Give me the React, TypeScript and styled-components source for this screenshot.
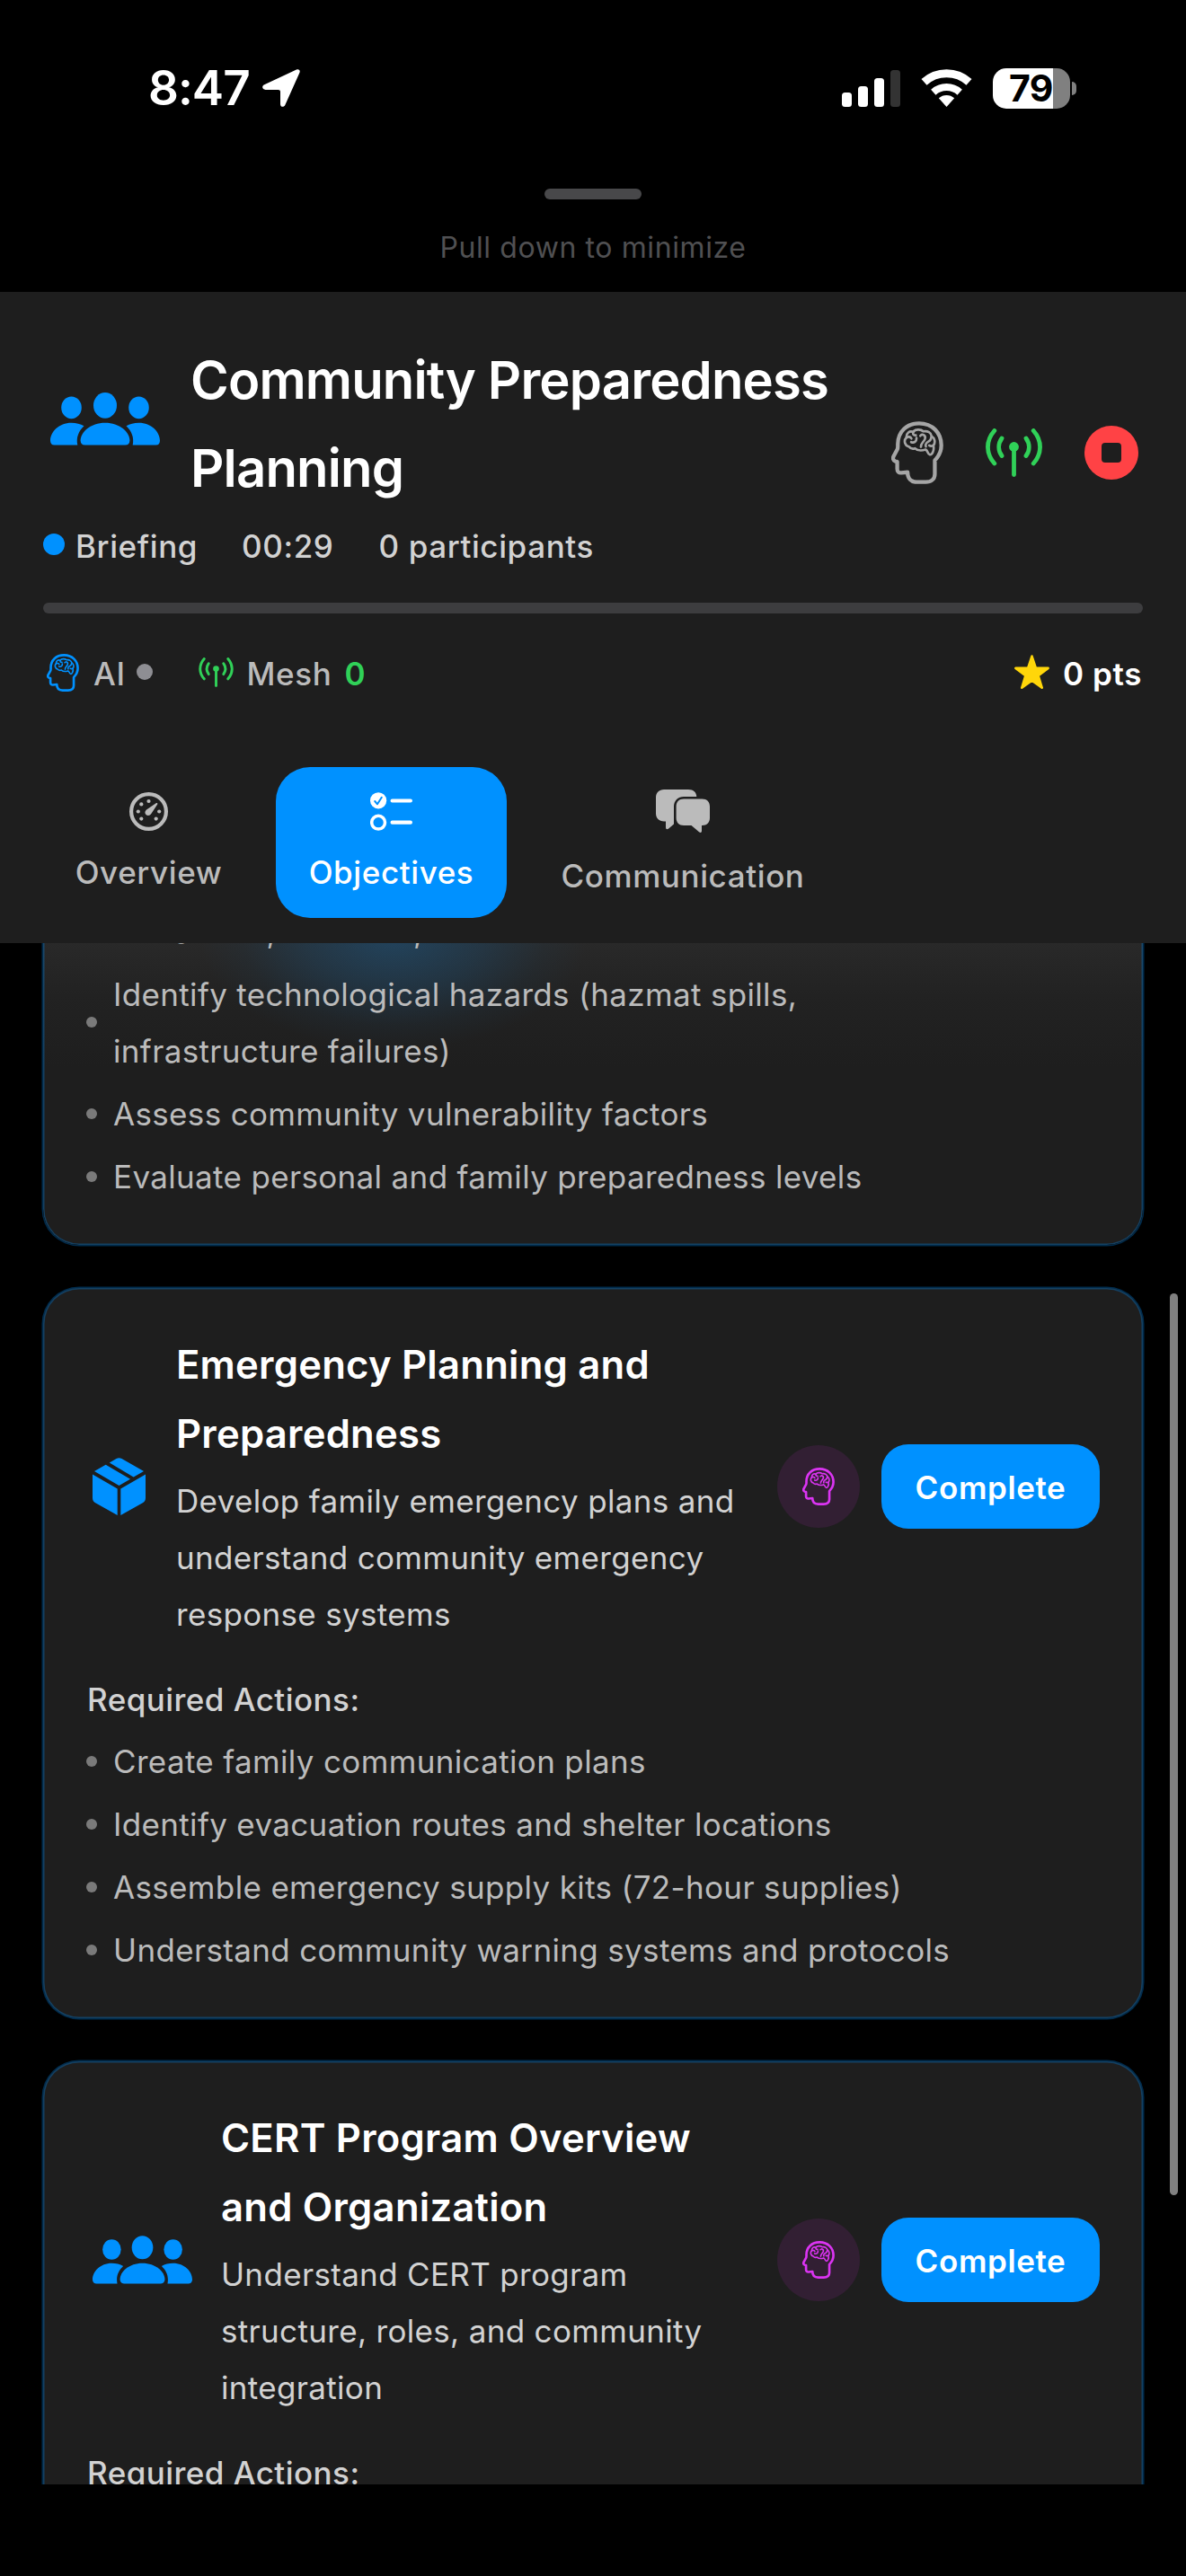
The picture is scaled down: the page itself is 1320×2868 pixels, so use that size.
import React from "react";
import styled, { createGlobalStyle } from "styled-components";

const BLUE = "#0091ff";
const GREEN = "#30d158";
const PANEL = "#1e1e1e";
const PURPLE = "#db34f2";

const GlobalStyle = createGlobalStyle`
  html, body { margin: 0; padding: 0; background: #000; }
  * { box-sizing: border-box; }
`;

const Screen = styled.main`
  width: 1320px;
  height: 2868px;
  background: #000;
  display: flex;
  flex-direction: column;
  overflow: hidden;
  font-family: Inter, "Liberation Sans", sans-serif;
  white-space: nowrap;

  svg {
    display: block;
    flex: none;
  }
`;

/* ---------- status bar ---------- */

const StatusBar = styled.div`
  height: 210px;
  padding: 0 122px 14px 165px;
  display: flex;
  align-items: center;
  justify-content: space-between;
`;

const Clock = styled.div`
  display: flex;
  align-items: center;
  gap: 14px;
  color: #fff;
  font-size: 53px;
  font-weight: 600;
  line-height: 64px;
  letter-spacing: -1px;
`;

const StatusIcons = styled.div`
  display: flex;
  align-items: center;
  gap: 23px;
`;

const Battery = styled.div`
  display: flex;
  align-items: center;
  gap: 2px;
`;

const BatteryBody = styled.div`
  width: 86px;
  height: 45px;
  padding-right: 19px;
  border-radius: 15px;
  background: linear-gradient(90deg, #fff 67px, #808080 67px);
  color: #000;
  font-size: 41px;
  font-weight: 700;
  line-height: 45px;
  letter-spacing: -0.5px;
  text-align: right;
`;

const BatteryCap = styled.div`
  width: 5px;
  height: 15px;
  border-radius: 0 5px 5px 0;
  background: #808080;
`;

/* ---------- pull handle ---------- */

const Handle = styled.div`
  height: 115px;
  display: flex;
  flex-direction: column;
  align-items: center;
  gap: 31px;
`;

const Grabber = styled.div`
  width: 108px;
  height: 12px;
  border-radius: 6px;
  background: #48484a;
`;

const Hint = styled.div`
  color: #505052;
  font-size: 32px;
  line-height: 46px;
  letter-spacing: 0.6px;
`;

/* ---------- header ---------- */

const Header = styled.header`
  height: 725px;
  padding: 49px 48px 0;
  background: ${PANEL};
  display: flex;
  flex-direction: column;
`;

const TitleRow = styled.div`
  height: 196px;
  padding-left: 8px;
  display: flex;
  align-items: center;

  > svg {
    margin-bottom: 11px;
  }
`;

const Title = styled.h1`
  margin: 0 0 0 34px;
  color: #fff;
  font-size: 58px;
  font-weight: 600;
  line-height: 98px;
  letter-spacing: -0.83px;
`;

const HeaderActions = styled.div`
  margin: 64px 5px 0 auto;
  display: flex;
  align-items: center;
  gap: 47px;
`;

const StopButton = styled.div`
  width: 60px;
  height: 60px;
  border-radius: 50%;
  background: #ff4245;
  display: flex;
  align-items: center;
  justify-content: center;

  &::after {
    content: "";
    width: 22px;
    height: 22px;
    border-radius: 4px;
    background: ${PANEL};
  }
`;

const StatRow = styled.div`
  margin-top: 7px;
  height: 63px;
  display: flex;
  align-items: center;
  color: #d2d2d2;
  font-size: 35px;
  font-weight: 500;
  line-height: 63px;
  letter-spacing: 0.6px;
`;

const Stat = styled.span<{ $left: number }>`
  margin-left: ${(p) => p.$left}px;
`;

const Dot = styled.span<{ $size: number; $color: string; $left?: number; $lift?: number }>`
  flex: none;
  width: ${(p) => p.$size}px;
  height: ${(p) => p.$size}px;
  margin-left: ${(p) => p.$left ?? 0}px;
  margin-bottom: ${(p) => p.$lift ?? 0}px;
  border-radius: 50%;
  background: ${(p) => p.$color};
`;

const Progress = styled.div`
  flex: none;
  margin-top: 31px;
  height: 12px;
  border-radius: 6px;
  background: #3d3d3f;
`;

const SystemRow = styled.div`
  margin-top: 36px;
  height: 63px;
  padding: 0 1px 0 4px;
  display: flex;
  align-items: center;
  color: #bbb;
  font-size: 35px;
  font-weight: 500;
  line-height: 63px;
  letter-spacing: 0.6px;

  > svg {
    margin-bottom: 4px;
  }
`;

const MeshCount = styled.span`
  margin-left: 14px;
  color: ${GREEN};
  font-weight: 600;
`;

const Score = styled.div`
  margin-left: auto;
  display: flex;
  align-items: center;
  gap: 15px;
  color: #fff;
  font-weight: 600;

  > svg {
    margin-bottom: 4px;
  }
`;

const Tabs = styled.nav`
  margin-top: 72px;
  height: 168px;
  display: flex;
  align-items: center;
  gap: 24px;
`;

const Tab = styled.div<{ $width: number; $active?: boolean }>`
  width: ${(p) => p.$width}px;
  padding: 24px 0 19px;
  border-radius: 38px;
  background: ${(p) => (p.$active ? BLUE : "transparent")};
  color: ${(p) => (p.$active ? "#fff" : "#bbb")};
  display: flex;
  flex-direction: column;
  align-items: center;
  gap: 12px;
  font-size: 35px;
  font-weight: 500;
  line-height: 63px;
  letter-spacing: 0.6px;
`;

const TabIcon = styled.div<{ $height: number }>`
  height: ${(p) => p.$height}px;
  display: flex;
  align-items: center;
`;

/* ---------- objectives list ---------- */

const ScrollArea = styled.section`
  position: relative;
  height: 1716px;
  overflow: hidden;
`;

const ScrollThumb = styled.div`
  position: absolute;
  top: 390px;
  right: 9px;
  width: 9px;
  height: 1004px;
  border-radius: 5px;
  background: #808080;
`;

const CardList = styled.div`
  margin-top: -91px;
  padding: 0 48px;
  display: flex;
  flex-direction: column;
  gap: 48px;
`;

const Card = styled.article<{ $glow?: boolean }>`
  padding: 47px 48px 44px;
  border-radius: 40px;
  background: ${(p) =>
    p.$glow
      ? `radial-gradient(ellipse 215px 125px at 390px 85px, rgba(31, 78, 114, 0.7), rgba(31, 78, 114, 0.38) 45%, rgba(31, 78, 114, 0.1) 78%, transparent),
         linear-gradient(180deg, #292929 90px, #222 150px, ${PANEL} 230px)`
      : PANEL};
  box-shadow:
    0 0 0 1.5px rgba(0, 145, 255, 0.3),
    inset 0 0 0 1.5px rgba(0, 145, 255, 0.3);
`;

const CardHead = styled.div`
  padding-left: 7px;
  display: flex;
  align-items: center;
`;

const CardText = styled.div`
  margin-left: 32px;
  display: flex;
  flex-direction: column;
  gap: 5px;
`;

const CardTitle = styled.h2`
  margin: 0;
  color: #fff;
  font-size: 43.6px;
  font-weight: 600;
  line-height: 77px;
  letter-spacing: 0.23px;
`;

const CardDescription = styled.p`
  margin: 0;
  color: #d2d2d2;
  font-size: 35px;
  line-height: 63px;
  letter-spacing: 0.33px;
`;

const CardActions = styled.div`
  margin-left: auto;
  display: flex;
  align-items: center;
  gap: 24px;
`;

const AssistButton = styled.div`
  width: 92px;
  height: 92px;
  border-radius: 50%;
  background: #321f33;
  display: flex;
  align-items: center;
  justify-content: center;
`;

const CompleteButton = styled.div`
  width: 243px;
  height: 94px;
  border-radius: 30px;
  background: ${BLUE};
  color: #fff;
  font-size: 35px;
  font-weight: 600;
  line-height: 96px;
  letter-spacing: 0.6px;
  text-align: center;
`;

const ActionsLabel = styled.h3`
  margin: 32px 0 6px;
  padding-left: 1px;
  color: #d2d2d2;
  font-size: 35px;
  font-weight: 500;
  line-height: 63px;
  letter-spacing: 0.45px;
`;

const ActionList = styled.ul`
  margin: 0;
  padding: 0;
  list-style: none;
  display: flex;
  flex-direction: column;
  gap: 7px;
`;

const ActionItem = styled.li`
  display: flex;
  align-items: center;
  gap: 18px;
  color: #bbb;
  font-size: 35px;
  line-height: 63px;
  letter-spacing: 0.34px;
`;

/* ---------- icons ---------- */

const HeadIcon = ({ w, h, color }: { w: number; h: number; color: string }) => (
  <svg width={w} height={h} viewBox="34 27 176 211" preserveAspectRatio="none" fill="none" stroke={color} strokeLinecap="round" strokeLinejoin="round">
    <path
      strokeWidth="13"
      d="M56 104C56 62 86 34 128 34C173 34 203 66 203 108C203 129 195 144 181 158V204C181 222 168 231 150 231H120C100 231 89 219 89 198L68 200C59 201 54 196 54 187V163L47 161C40 158 38 151 42 144L54 122C57 117 56 112 56 104Z"
    />
    <g strokeWidth="8">
      <path d="M93 112C79 108 75 91 85 82C84 66 96 58 108 63C114 53 134 53 142 61C157 58 169 66 170 77C181 83 184 99 176 108C180 124 172 141 164 139C156 137 159 127 150 122C138 126 124 127 114 118C106 121 98 118 93 112Z" />
      <path d="M85 82C91 77 99 79 102 85" />
      <path d="M108 63C106 71 110 75 117 74" />
      <path d="M119 83C120 95 111 101 101 97" />
      <path d="M132 76C138 66 153 75 147 88C142 98 133 102 134 113" />
      <path d="M170 78C169 87 165 93 158 96C151 100 148 107 151 112" />
      <path d="M176 108C171 111 166 111 162 108" />
    </g>
  </svg>
);

const AntennaIcon = ({ w, h }: { w: number; h: number }) => (
  <svg width={w} height={h} viewBox="0 0 63 54" fill="none" stroke={GREEN} strokeWidth="4.8" strokeLinecap="round">
    <circle cx="31.5" cy="20.5" r="5.4" fill={GREEN} stroke="none" />
    <path d="M31.5 20V51.6" />
    <path d="M18 11C13.7 17 13.7 24.500 18 30.500M45 11C49.300 17 49.300 24.500 45 30.500" />
    <path d="M9.800 2.500C0 13.500 0 28 9.800 39M53.200 2.500C63 13.500 63 28 53.200 39" />
  </svg>
);

const PeopleIcon = ({ w, h }: { w: number; h: number }) => (
  <svg width={w} height={h} viewBox="0 0 122 59" fill={BLUE}>
    <ellipse cx="61" cy="14.400" rx="13" ry="14.400" />
    <ellipse cx="23.500" cy="16.800" rx="11.300" ry="12.400" />
    <ellipse cx="98.500" cy="16.800" rx="11.300" ry="12.400" />
    <path d="M33.600 53.500C33.600 44 45 33.700 61 33.700S88.400 44 88.400 53.500C88.400 56.500 86.600 58.500 83.400 58.500H38.600C35.400 58.500 33.600 56.500 33.600 53.500Z" />
    <path d="M0 53.500C0 44 9.500 33.700 23.500 33.700C28.800 33.700 33.600 35 37.500 37.200C31.500 43 28.500 50 30.300 58.500H4.500C1.500 58.500 0 56.500 0 53.500Z" />
    <path d="M122 53.500C122 44 112.500 33.700 98.500 33.700C93.200 33.700 88.400 35 84.500 37.200C90.500 43 93.500 50 91.700 58.500H117.500C120.500 58.500 122 56.500 122 53.500Z" />
  </svg>
);

const BoxIcon = () => (
  <svg width="61" height="64" viewBox="0 0 61 64" fill={BLUE}>
    <path d="M0 18.500L27.700 34.400V64L3.200 50.200C1 49 0 47.300 0 44.800Z" />
    <path d="M59 18.500L31.300 34.400V64L55.800 50.200C58 49 59 47.300 59 44.800Z" />
    <path d="M2 15L14.700 7.800L42 23.800L29.500 30.900Z" />
    <path d="M18.800 5.500L26.500 1.100C28.600 0 30.400 0 32.500 1.100L57 15L45.600 21.500Z" />
  </svg>
);

const StarIcon = () => (
  <svg width="39" height="39" viewBox="0 0 39 39" fill="#ffd60a" stroke="#ffd60a" strokeWidth="2.600" strokeLinejoin="round">
    <path d="M19.500 1.600L23.900 14.800L37.600 14.900L26.600 23.200L30.700 36.700L19.500 28.600L8.300 36.700L12.400 23.200L1.400 14.900L15.100 14.800Z" />
  </svg>
);

const GaugeIcon = () => (
  <svg width="43" height="43" viewBox="0 0 43 43" fill="#bbb">
    <circle cx="21.500" cy="21.500" r="19.400" fill="none" stroke="#bbb" strokeWidth="4.200" />
    {[
      [21.5, 10],
      [13.3, 13.4],
      [9.8, 21.5],
      [33.2, 21.5],
      [13.3, 29.6],
      [29.7, 29.6],
    ].map(([x, y]) => (
      <circle key={`${x}-${y}`} cx={x} cy={y} r="2.100" />
    ))}
    <path d="M31 12.200C31.500 12.600 31.500 13 31.200 13.600L24.300 24C22.900 26.100 20.500 26.600 18.700 25.200C17 23.800 17 21.400 18.700 19.700L29.600 12.200C30.200 11.800 30.600 11.800 31 12.200Z" />
  </svg>
);

const ChecklistIcon = () => (
  <svg width="47" height="43" viewBox="0 0 47 43" fill="none" stroke="#fff" strokeLinecap="round" strokeLinejoin="round">
    <circle cx="9.100" cy="9.300" r="9.100" fill="#fff" stroke="none" />
    <path d="M5.200 10L8 13.300L12.800 5.800" stroke={BLUE} strokeWidth="2" />
    <circle cx="9.100" cy="33.700" r="7.400" strokeWidth="3.500" />
    <path d="M24.600 9.500H44.900M24.600 33.700H44.900" strokeWidth="4.200" />
  </svg>
);

const ChatIcon = () => (
  <svg width="60" height="48" viewBox="0 0 60 48" fill="#bbb">
    <path d="M9 0H36C42 0 45 3.200 45.300 8H31C24.500 8 20 12.500 20 19V38.500L14.500 43.300C12.500 45 11 44.300 11 42V35.500H9C3.500 35.500 0 32 0 26.500V9C0 3.500 3.500 0 9 0Z" />
    <path d="M31 10.500H51.500C56.800 10.500 60 13.800 60 19V31.500C60 36.800 56.800 40 51.500 40H51V46C51 48 49.500 48.500 48 47.200L39.500 40H31C25.700 40 22.600 36.800 22.600 31.500V19C22.600 13.800 25.700 10.500 31 10.500Z" />
  </svg>
);

const LocationIcon = () => (
  <svg width="42" height="42" viewBox="0 0 42 42" fill="#fff">
    <path d="M38 0.600C40.600 -0.500 42.500 1.400 41.400 4L25.400 39.800C24.100 42.800 20.100 42.500 20 39V25.200C20 23.600 19.300 22.900 17.700 22.900H3.500C-0.200 22.800 -1.100 18.800 2.200 17.200Z" />
  </svg>
);

const SignalIcon = () => (
  <svg width="65" height="42" viewBox="0 0 65 42" fill="#fff">
    <rect x="0" y="26" width="11" height="16" rx="3.500" />
    <rect x="18" y="19" width="11" height="23" rx="3.500" />
    <rect x="36" y="10" width="11" height="32" rx="3.500" />
    <rect x="54" y="1" width="11" height="41" rx="3.500" fill="#333" />
  </svg>
);

const WifiIcon = () => (
  <svg width="57" height="42" viewBox="0 0 57 42" fill="none" stroke="#fff">
    <path d="M3.500 14.300A37.300 37.300 0 0 1 53.500 14.300" strokeWidth="9" />
    <path d="M13.800 25.700A22 22 0 0 1 43.200 25.700" strokeWidth="8" />
    <path d="M28.500 42L19.800 32.300A13 13 0 0 1 37.200 32.300Z" fill="#fff" stroke="none" />
  </svg>
);

/* ---------- composition ---------- */

const Lines = ({ lines }: { lines: string[] }) => (
  <>
    {lines.map((line, i) => (
      <React.Fragment key={line}>
        {i > 0 && <br />}
        {line}
      </React.Fragment>
    ))}
  </>
);

const Actions = ({ items }: { items: string[][] }) => (
  <ActionList>
    {items.map((lines) => (
      <ActionItem key={lines[0]}>
        <Dot $size={12} $color="#7a7a7a" $lift={2} />
        <span>
          <Lines lines={lines} />
        </span>
      </ActionItem>
    ))}
  </ActionList>
);

type ObjectiveProps = {
  icon: React.ReactNode;
  title: string[];
  description: string[];
  items: string[][];
};

const Objective = ({ icon, title, description, items }: ObjectiveProps) => (
  <Card>
    <CardHead>
      {icon}
      <CardText>
        <CardTitle>
          <Lines lines={title} />
        </CardTitle>
        <CardDescription>
          <Lines lines={description} />
        </CardDescription>
      </CardText>
      <CardActions>
        <AssistButton>
          <HeadIcon w={36} h={42} color={PURPLE} />
        </AssistButton>
        <CompleteButton>Complete</CompleteButton>
      </CardActions>
    </CardHead>
    <ActionsLabel>Required Actions:</ActionsLabel>
    <Actions items={items} />
  </Card>
);

export default function App() {
  return (
    <Screen>
      <GlobalStyle />
      <StatusBar>
        <Clock>
          8:47
          <LocationIcon />
        </Clock>
        <StatusIcons>
          <SignalIcon />
          <WifiIcon />
          <Battery>
            <BatteryBody>79</BatteryBody>
            <BatteryCap />
          </Battery>
        </StatusIcons>
      </StatusBar>
      <Handle>
        <Grabber />
        <Hint>Pull down to minimize</Hint>
      </Handle>

      <Header>
        <TitleRow>
          <PeopleIcon w={122} h={59} />
          <Title>
            <Lines lines={["Community Preparedness", "Planning"]} />
          </Title>
          <HeaderActions>
            <HeadIcon w={58} h={70} color="#a5a5a5" />
            <AntennaIcon w={63} h={54} />
            <StopButton />
          </HeaderActions>
        </TitleRow>
        <StatRow>
          <Dot $size={24} $color={BLUE} $lift={5} />
          <Stat $left={12}>Briefing</Stat>
          <Stat $left={49}>00:29</Stat>
          <Stat $left={50}>0 participants</Stat>
        </StatRow>
        <Progress />
        <SystemRow>
          <HeadIcon w={36} h={42} color={BLUE} />
          <Stat $left={16}>AI</Stat>
          <Dot $size={18} $color="#8e8e93" $left={12} $lift={5} />
          <Stat $left={51} />
          <AntennaIcon w={39} h={33} />
          <Stat $left={15}>Mesh</Stat>
          <MeshCount>0</MeshCount>
          <Score>
            <StarIcon />
            0 pts
          </Score>
        </SystemRow>
        <Tabs>
          <Tab $width={235}>
            <TabIcon $height={50}>
              <GaugeIcon />
            </TabIcon>
            Overview
          </Tab>
          <Tab $width={257} $active>
            <TabIcon $height={50}>
              <ChecklistIcon />
            </TabIcon>
            Objectives
          </Tab>
          <Tab $width={344}>
            <TabIcon $height={58}>
              <ChatIcon />
            </TabIcon>
            Communication
          </Tab>
        </Tabs>
      </Header>

      <ScrollArea>
        <CardList>
          <Card $glow>
            <Actions
              items={[
                ["tornadoes, wildfires,"],
                ["Identify technological hazards (hazmat spills,", "infrastructure failures)"],
                ["Assess community vulnerability factors"],
                ["Evaluate personal and family preparedness levels"],
              ]}
            />
          </Card>
          <Objective
            icon={<BoxIcon />}
            title={["Emergency Planning and", "Preparedness"]}
            description={["Develop family emergency plans and", "understand community emergency", "response systems"]}
            items={[
              ["Create family communication plans"],
              ["Identify evacuation routes and shelter locations"],
              ["Assemble emergency supply kits (72-hour supplies)"],
              ["Understand community warning systems and protocols"],
            ]}
          />
          <Objective
            icon={<PeopleIcon w={111} h={54} />}
            title={["CERT Program Overview", "and Organization"]}
            description={["Understand CERT program", "structure, roles, and community", "integration"]}
            items={[]}
          />
        </CardList>
        <ScrollThumb />
      </ScrollArea>
    </Screen>
  );
}
